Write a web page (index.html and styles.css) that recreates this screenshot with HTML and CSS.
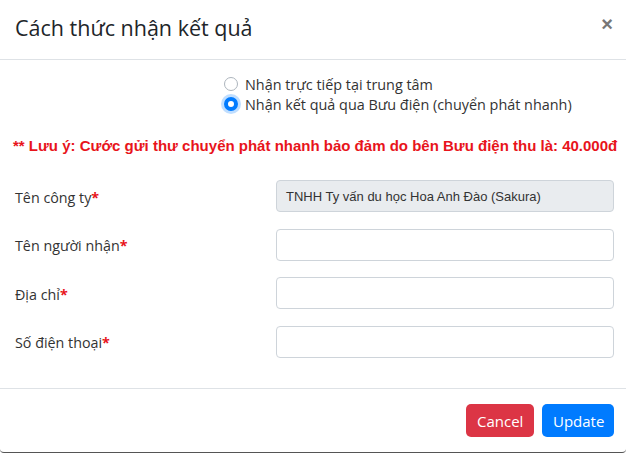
FILE: index.html
```html
<!DOCTYPE html>
<html lang="vi">
<head>
<meta charset="utf-8">
<link rel="stylesheet" href="styles.css">
</head>
<body>
<div class="modal">
  <div class="modal-header">
    <h4 class="modal-title">Cách thức nhận kết quả</h4>
    <span class="close">×</span>
  </div>
  <div class="modal-body">
    <div class="radios">
      <label class="radio"><span class="dot"></span>Nhận trực tiếp tại trung tâm</label>
      <label class="radio"><span class="dot checked"></span>Nhận kết quả qua Bưu điện (chuyển phát nhanh)</label>
    </div>
    <p class="note">** Lưu ý: Cước gửi thư chuyển phát nhanh bảo đảm do bên Bưu điện thu là: 40.000đ</p>
    <div class="form">
      <div class="row">
        <span class="label">Tên công ty<b>*</b></span>
        <div class="input readonly">TNHH Ty vấn du học Hoa Anh Đào (Sakura)</div>
      </div>
      <div class="row">
        <span class="label">Tên người nhận<b>*</b></span>
        <div class="input"></div>
      </div>
      <div class="row">
        <span class="label">Địa chỉ<b>*</b></span>
        <div class="input"></div>
      </div>
      <div class="row">
        <span class="label">Số điện thoại<b>*</b></span>
        <div class="input"></div>
      </div>
    </div>
  </div>
  <div class="modal-footer">
    <button class="btn btn-cancel">Cancel</button>
    <button class="btn btn-update">Update</button>
  </div>
</div>
</body>
</html>
```
FILE: styles.css
```css
html, body {
  margin: 0;
  padding: 0;
  background: #fff;
}
body {
  font-family: "Open Sans", "Noto Sans", sans-serif;
  color: #212529;
  width: 626px;
  height: 453px;
  overflow: hidden;
}
.modal {
  box-sizing: border-box;
  width: 626px;
  height: 453px;
  border-bottom: 1px solid #555;
  border-radius: 0 0 4px 4px;
  display: flex;
  flex-direction: column;
}
.modal-header {
  height: 59px;
  border-bottom: 1px solid #dee2e6;
  display: flex;
  align-items: center;
  justify-content: space-between;
  padding: 0 13px 0 15px;
  box-sizing: content-box;
}
.modal-title {
  margin: 0;
  font-size: 21.5px;
  font-weight: 400;
  color: #212529;
  position: relative;
  top: -2px;
}
.close {
  font-size: 20px;
  font-weight: 700;
  color: #777;
  position: relative;
  top: -5px;
  font-family: "Liberation Sans", Arial, sans-serif;
}
.modal-body {
  flex: 1;
  border-bottom: 1px solid #dee2e6;
}
.radios {
  display: flex;
  flex-direction: column;
  padding: 14px 0 0 224px;
}
.radio {
  display: flex;
  align-items: center;
  font-size: 14.4px;
  height: 20px;
  color: #333;
}
.dot {
  width: 14px;
  height: 14px;
  border: 1px solid #adb5bd;
  border-radius: 50%;
  margin-right: 7px;
  box-sizing: border-box;
  background: #fff;
}
.dot.checked {
  border: 4px solid #007bff;
  background: #fff;
  box-shadow: 0 0 0 3px rgba(0, 123, 255, 0.25);
}
.note {
  margin: 23px 0 0 13px;
  font-family: "Liberation Sans", Arial, sans-serif;
  font-weight: 700;
  font-size: 15px;
  line-height: 18px;
  color: #e8141b;
  white-space: nowrap;
}
.form {
  margin-top: 25px;
  display: flex;
  flex-direction: column;
  gap: 16.5px;
  padding: 0 12px 0 15px;
}
.row {
  display: flex;
  align-items: center;
  justify-content: space-between;
}
.label {
  font-size: 14.3px;
  color: #333;
  position: relative;
  top: 1px;
}
.label b {
  color: #e8141b;
  font-weight: 700;
}
.input {
  box-sizing: border-box;
  width: 338px;
  height: 32px;
  border: 1px solid #ced4da;
  border-radius: 4px;
  background: #fff;
  font-family: "Liberation Sans", Arial, sans-serif;
  font-size: 13px;
  color: #333;
  padding: 0 9px;
  display: flex;
  align-items: center;
}
.input.readonly {
  background: #e9ecef;
}
.modal-footer {
  height: 63px;
  display: flex;
  justify-content: flex-end;
  align-items: center;
  gap: 8px;
  padding: 0 12px;
}
.btn {
  font-family: "Open Sans", "Noto Sans", sans-serif;
  font-size: 15px;
  color: #fff;
  border: 0;
  border-radius: 5px;
  height: 33px;
  padding: 0 11px;
}
.btn-cancel {
  background: #dc3545;
  width: 68px;
}
.btn-update {
  background: #007bff;
  width: 72px;
}
```
